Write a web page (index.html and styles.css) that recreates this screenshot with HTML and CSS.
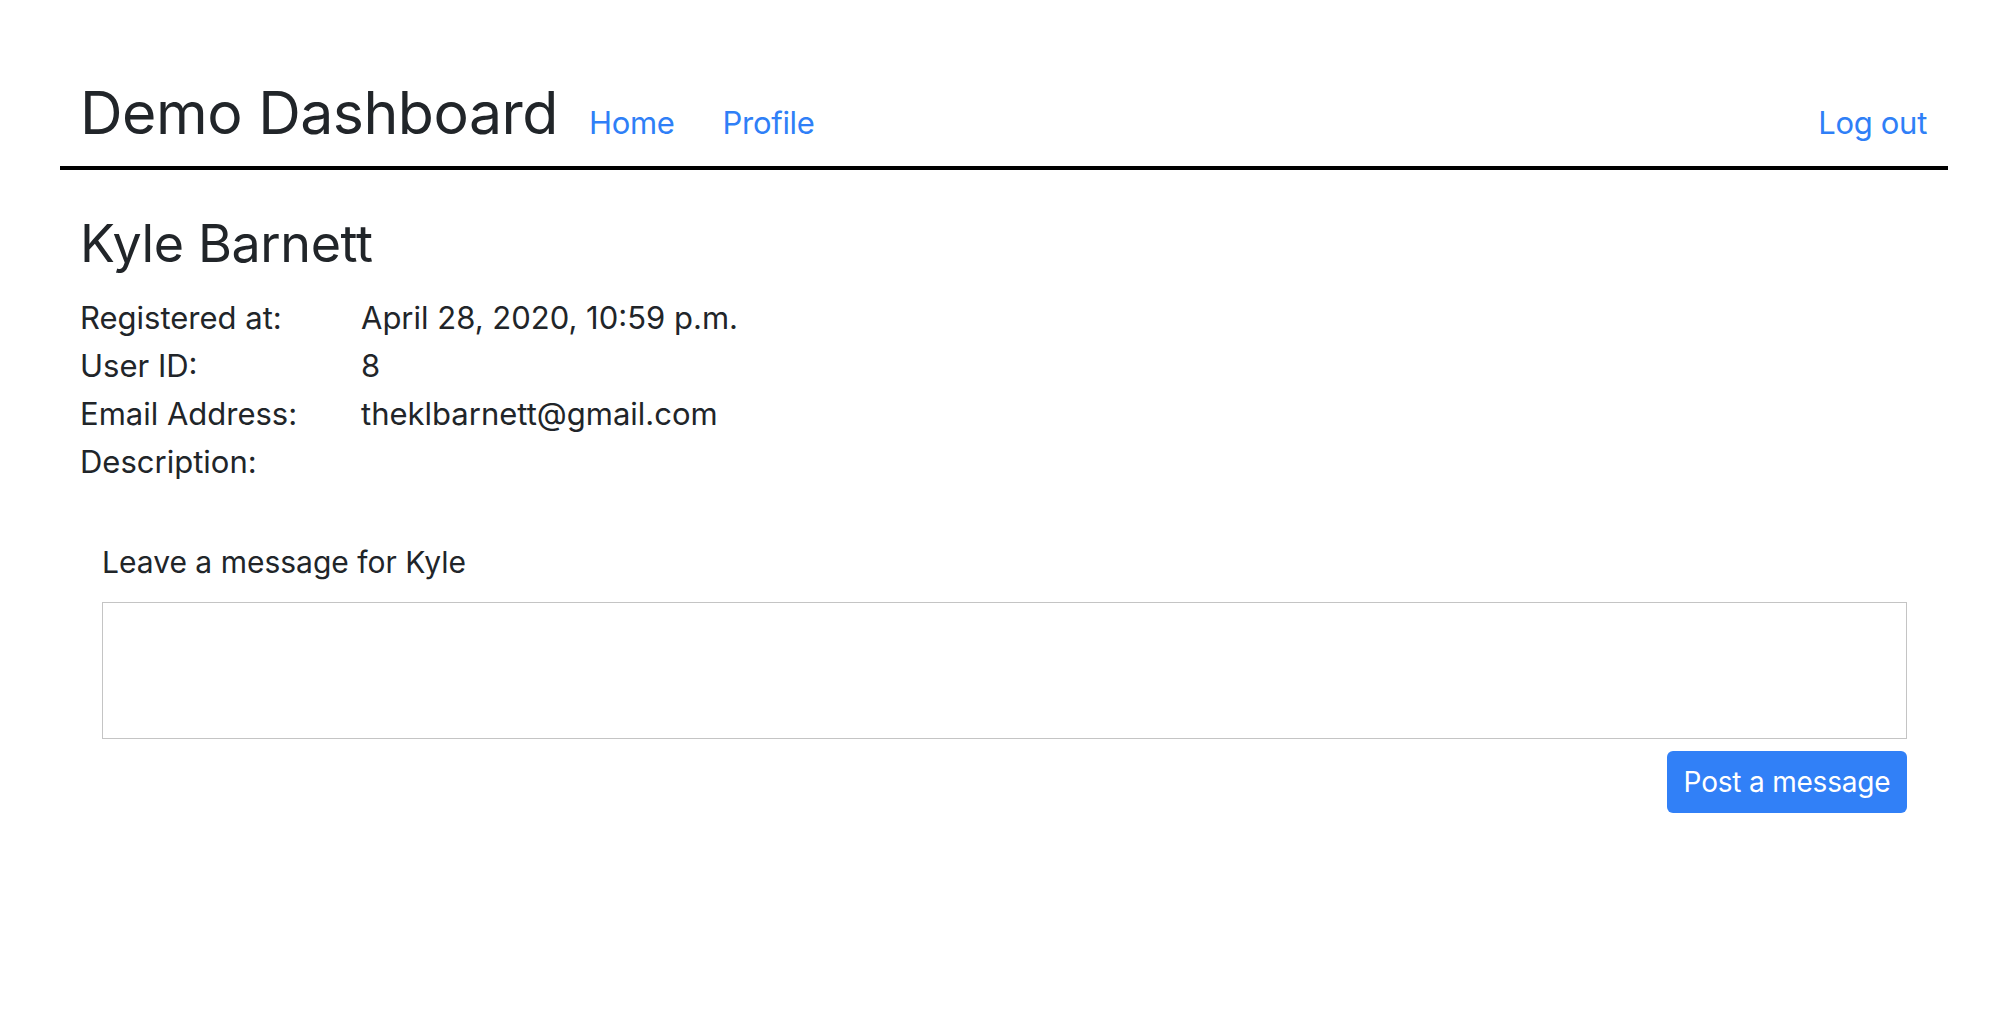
FILE: index.html
```html
<!DOCTYPE html>
<html lang="en">
<head>
<meta charset="utf-8">
<title>Demo Dashboard</title>
<link rel="stylesheet" href="styles.css">
</head>
<body>
<div class="page">
  <header class="topbar">
    <h1 class="brand">Demo Dashboard</h1>
    <nav class="nav">
      <a class="nav-link" href="#">Home</a>
      <a class="nav-link" href="#">Profile</a>
    </nav>
    <a class="nav-link logout" href="#">Log out</a>
  </header>
  <main class="content">
    <h2 class="name">Kyle Barnett</h2>
    <div class="details">
      <div class="label">Registered at:</div><div class="value">April 28, 2020, 10:59 p.m.</div>
      <div class="label">User ID:</div><div class="value">8</div>
      <div class="label">Email Address:</div><div class="value">theklbarnett@gmail.com</div>
      <div class="label">Description:</div><div class="value"></div>
    </div>
    <form class="message-form">
      <label class="form-label" for="msg">Leave a message for Kyle</label>
      <textarea class="message-box" id="msg"></textarea>
      <div class="actions">
        <button class="btn" type="button">Post a message</button>
      </div>
    </form>
  </main>
</div>
</body>
</html>
```

FILE: styles.css
```css
* { box-sizing: border-box; }
html, body { margin: 0; padding: 0; background: #fff; }
body {
  font-family: Inter, "Noto Sans", "Liberation Sans", sans-serif;
  color: #212529;
  font-size: 31px;
}
.page {
  margin: 0 48px 0 60px;
  padding-top: 76px;
}
.topbar {
  display: flex;
  align-items: baseline;
  padding: 0 21px 17px 20px;
  border-bottom: 4px solid #000;
}
.brand {
  margin: 0;
  font-size: 59px;
  font-weight: 400;
  line-height: 73px;
  letter-spacing: -0.5px;
}
.nav {
  display: flex;
  gap: 48px;
  margin-left: 31px;
}
.nav-link {
  color: #2f7ff7;
  text-decoration: none;
  font-size: 31px;
  letter-spacing: -0.3px;
}
.logout { margin-left: auto; }
.content {
  padding: 0 20px;
}
.name {
  margin: 43px 0 19px;
  font-size: 52px;
  font-weight: 400;
  line-height: 62px;
  letter-spacing: -0.4px;
}
.details {
  display: grid;
  grid-template-columns: 281px auto;
  line-height: 48px;
}
.message-form {
  display: flex;
  flex-direction: column;
  margin: 52px 21px 0 22px;
}
.form-label {
  font-size: 30px;
  line-height: 48px;
}
.message-box {
  margin-top: 16px;
  height: 137px;
  border: 1.5px solid #c4c4c4;
  resize: none;
  font: inherit;
}
.actions {
  display: flex;
  justify-content: flex-end;
  margin-top: 12px;
}
.btn {
  height: 62px;
  width: 240px;
  background: #3180f7;
  color: #fff;
  border: none;
  border-radius: 6px;
  font-family: inherit;
  font-size: 28px;
  letter-spacing: -0.2px;
  padding: 0;
}
```
